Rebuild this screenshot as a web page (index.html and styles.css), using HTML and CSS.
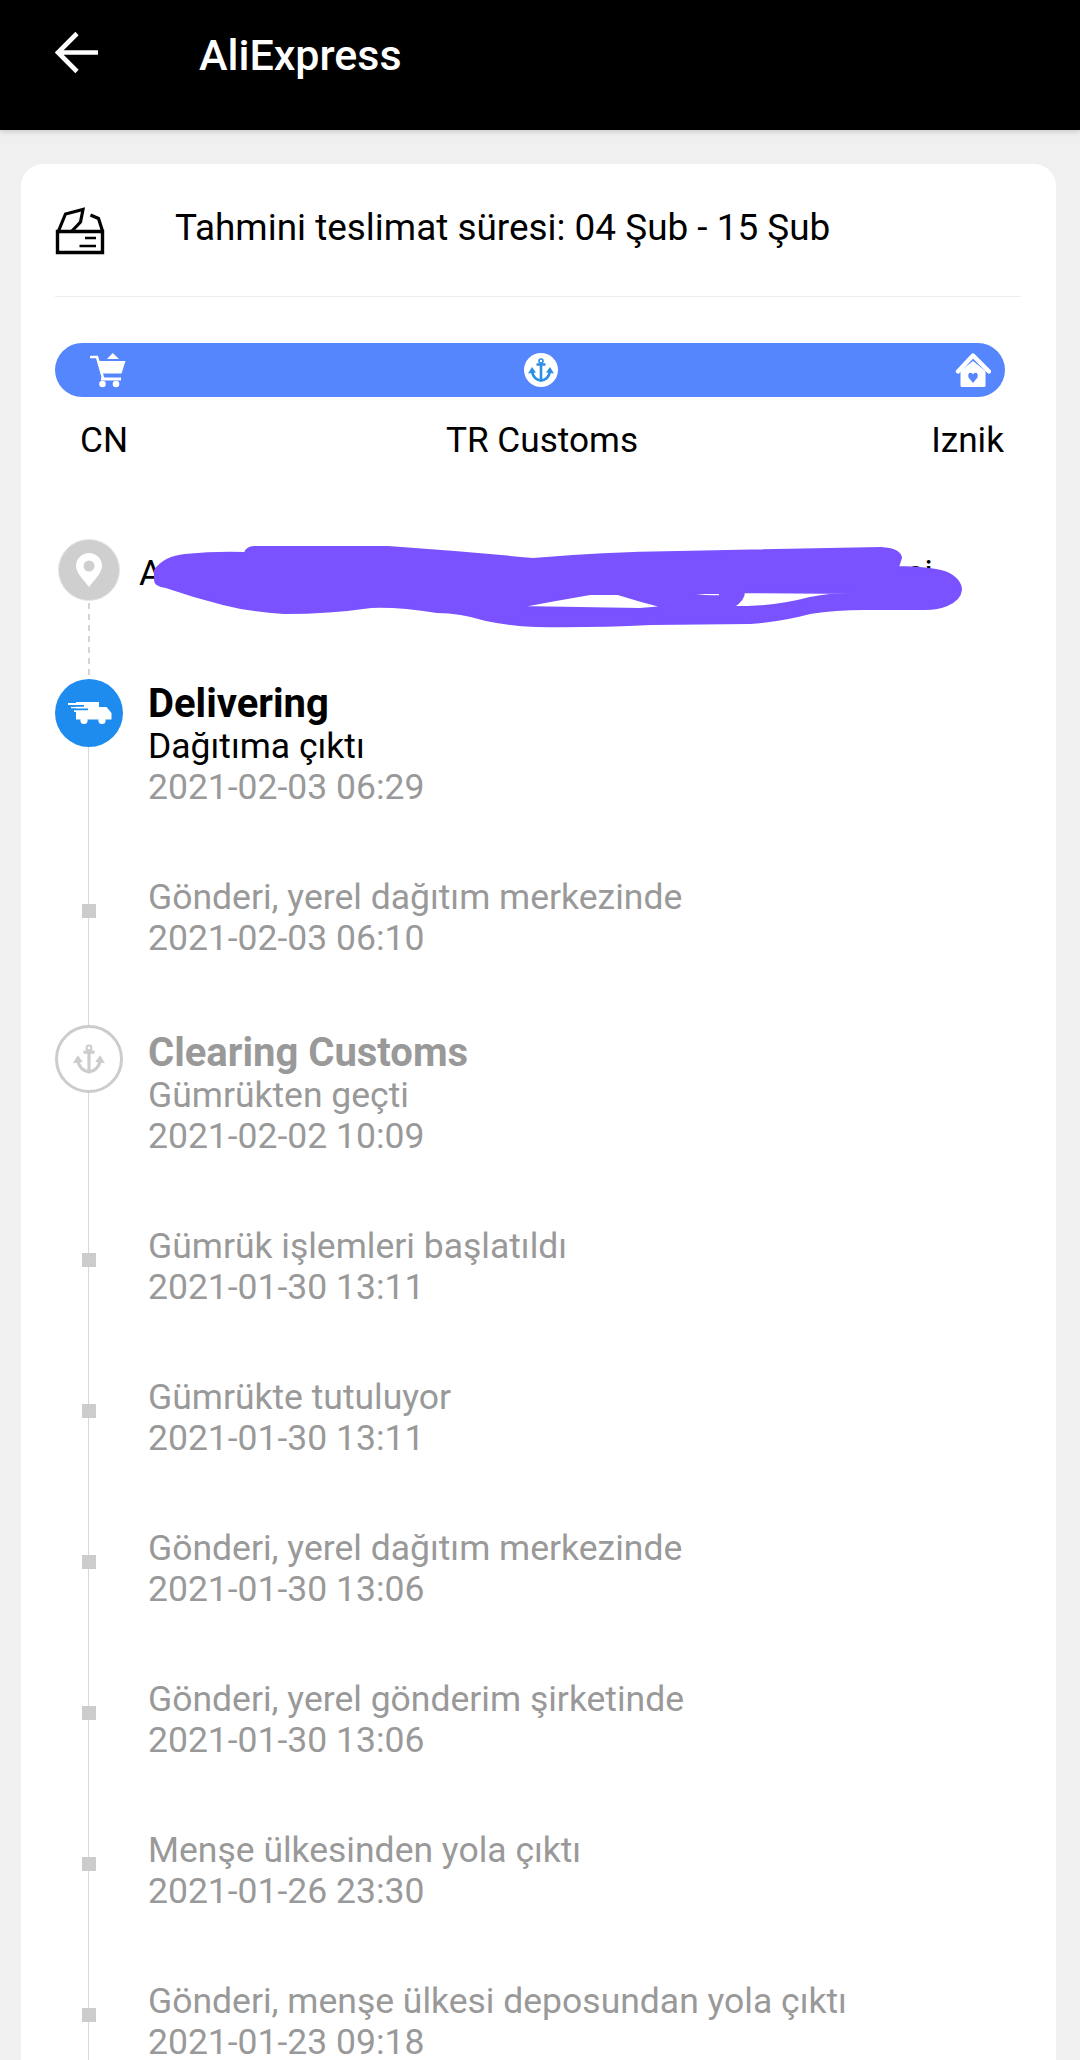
FILE: index.html
```html
<!DOCTYPE html>
<html lang="tr">
<head>
    <meta charset="UTF-8" />
    <meta name="viewport" content="width=device-width, initial-scale=1.0" />
    <title>AliExpress</title>
    <link rel="stylesheet" href="styles.css">
</head>
<body>
    <svg class="defs" width="0" height="0">
        <symbol id="anchor" viewBox="0 0 34 34">
            <circle cx="17" cy="8" r="2" fill="none" stroke="currentColor" stroke-width="1.6" />
            <path d="M12.5 11.5H21.5M17 10V28.5" fill="none" stroke="currentColor" stroke-width="2.6" />
            <path d="M8 18.5C9 24 13 27 17 27.5C21 27 25 24 26 18.5" fill="none" stroke="currentColor" stroke-width="2.6" />
            <path d="M4 20.500L8 14L12 19.500ZM30 20.500L26 14L22 19.500Z" fill="currentColor" />
        </symbol>
    </svg>

    <header class="topbar">
        <svg class="back" width="44" height="44" viewBox="0 0 44 44">
            <path d="M43 21.5H5M22 2.5L3 21.5L22 40.5" fill="none" stroke="#fff" stroke-width="4.600" />
        </svg>
        <span class="topbar-title">AliExpress</span>
    </header>

    <main class="card">
        <div class="eta">
            <svg class="eta-icon" width="50" height="48" viewBox="54 207 50 48">
                <path d="M56.5 231.5H101.5V252.5H56.5Z" fill="none" stroke="#000" stroke-width="3.4" />
                <path d="M57.5 231L64.5 214L82 209.5L79.5 222L71 231" fill="none" stroke="#000" stroke-width="3.2" />
                <path d="M89.5 215L97.5 218.5L101.5 231" fill="none" stroke="#000" stroke-width="3.2" />
                <path d="M84 238H95M78.5 246H95" fill="none" stroke="#000" stroke-width="2.6" />
            </svg>
            <span class="eta-text">Tahmini teslimat süresi: 04 Şub - 15 Şub</span>
        </div>

        <div class="progress">
            <svg width="36" height="36" viewBox="90 352 36 36">
                <path d="M91 357H97L103 378" fill="none" stroke="#fff" stroke-width="2.6" stroke-linecap="round" />
                <path d="M98 361H125.5L121.5 373.5H102Z" fill="#fff" />
                <path d="M107 359L112.7 353L119 359Z" fill="#fff" />
                <path d="M101 377.5H121V380.5H101Z" fill="#fff" />
                <circle cx="102.5" cy="384" r="3.3" fill="#fff" />
                <circle cx="116" cy="384" r="3.3" fill="#fff" />
            </svg>
            <svg class="anchor-badge" width="34" height="34">
                <circle cx="17" cy="17" r="17" fill="#fff" />
                <use href="#anchor" width="34" height="34" />
            </svg>
            <svg width="36" height="36" viewBox="955 352 36 36">
                <path d="M958 371.5L973 355.5L989 371.5" fill="none" stroke="#fff" stroke-width="4.4" stroke-linecap="round" stroke-linejoin="round" />
                <path d="M960.5 371L973 361L985.5 371V385.5Q985.5 387 984 387H962Q960.5 387 960.5 385.5Z" fill="#fff" />
                <path d="M973 383L968.5 377.5Q967.5 373 970.5 372.8Q972.3 372.8 973 374.5Q973.7 372.8 975.5 372.8Q978.5 373 977.5 377.5Z" fill="#5686fd" />
            </svg>
        </div>
        <div class="stops">
            <span>CN</span>
            <span>TR Customs</span>
            <span class="stop-end">Iznik</span>
        </div>

        <div class="address">
            <div class="pin">
                <svg width="28" height="34" viewBox="0 0 28 34">
                    <path fill-rule="evenodd" d="M14 34C9 27 1 20 1 13A13 13 0 0 1 27 13C27 20 19 27 14 34ZM14 7.500A5.500 5.500 0 1 0 14 18.500A5.500 5.500 0 1 0 14 7.500Z" fill="#fff" />
                </svg>
            </div>
            <div class="address-text">
                <span>A</span>
                <span>si</span>
            </div>
            <!-- scribble drawn over the street address -->
            <svg class="scribble" width="815" height="90" viewBox="150 540 815 90">
                <path fill-rule="evenodd" stroke="#7a52ff" stroke-width="2" stroke-linejoin="round" fill="#7a52ff"
                    d="M155 570Q165 557 185 555Q215 552 245 553Q247 547 254 547L388 547Q460 552 533 559Q600 553 678 552L881 548Q900 549 901 558L898 567Q935 568 947 573Q961 580 961 590Q960 600 947 605Q938 609 925 609H865Q835 609 810 613Q780 621 750 623L651 624Q590 627 536 626Q510 625 486 620Q460 612 437 612Q400 606 371 607Q330 613 284 613Q250 611 223 604Q195 597 166 587Q155 586 155 580Z
                    M518 607Q555 600 590 594H618Q640 601 664 607L640 609Z
                    M686 593H720V596Q700 597 686 593Z
                    M744 592L856 593Q830 594 810 598Q780 606 748 607H733Q744 600 744 592Z" />
            </svg>
        </div>

        <div class="timeline">
            <div class="event">
                <div class="marker">
                    <div class="dot dot-active">
                        <svg width="46" height="24" viewBox="62 702 46 24">
                            <path d="M72 703H95V708H102.500L107.500 714V720.500H72Z" fill="#fff" />
                            <circle cx="80" cy="721.500" r="3.600" fill="#fff" />
                            <circle cx="98" cy="721.500" r="3.600" fill="#fff" />
                            <path d="M64 705H76M67 708.500H79M70 712H82" stroke="#fff" stroke-width="1.800" />
                            <path d="M64 706.800H80M67 710.300H84" stroke="#1e8bef" stroke-width="1.700" />
                        </svg>
                    </div>
                </div>
                <div class="event-body is-current">
                    <div class="event-title">Delivering</div>
                    <div>Dağıtıma çıktı</div>
                    <div class="event-date">2021-02-03 06:29</div>
                </div>
            </div>
            <div class="event">
                <div class="marker"><div class="square"></div></div>
                <div class="event-body">
                    <div>Gönderi, yerel dağıtım merkezinde</div>
                    <div>2021-02-03 06:10</div>
                </div>
            </div>
            <div class="event event-customs">
                <div class="marker">
                    <div class="dot dot-muted">
                        <svg width="42" height="42"><use href="#anchor" width="42" height="42" /></svg>
                    </div>
                </div>
                <div class="event-body">
                    <div class="event-title">Clearing Customs</div>
                    <div>Gümrükten geçti</div>
                    <div>2021-02-02 10:09</div>
                </div>
            </div>
            <div class="event">
                <div class="marker"><div class="square"></div></div>
                <div class="event-body">
                    <div>Gümrük işlemleri başlatıldı</div>
                    <div>2021-01-30 13:11</div>
                </div>
            </div>
            <div class="event">
                <div class="marker"><div class="square"></div></div>
                <div class="event-body">
                    <div>Gümrükte tutuluyor</div>
                    <div>2021-01-30 13:11</div>
                </div>
            </div>
            <div class="event">
                <div class="marker"><div class="square"></div></div>
                <div class="event-body">
                    <div>Gönderi, yerel dağıtım merkezinde</div>
                    <div>2021-01-30 13:06</div>
                </div>
            </div>
            <div class="event">
                <div class="marker"><div class="square"></div></div>
                <div class="event-body">
                    <div>Gönderi, yerel gönderim şirketinde</div>
                    <div>2021-01-30 13:06</div>
                </div>
            </div>
            <div class="event">
                <div class="marker"><div class="square"></div></div>
                <div class="event-body">
                    <div>Menşe ülkesinden yola çıktı</div>
                    <div>2021-01-26 23:30</div>
                </div>
            </div>
            <div class="event">
                <div class="marker"><div class="square"></div></div>
                <div class="event-body">
                    <div>Gönderi, menşe ülkesi deposundan yola çıktı</div>
                    <div>2021-01-23 09:18</div>
                </div>
            </div>
        </div>
    </main>
</body>
</html>
```

FILE: styles.css
```css
:root {
    --page: #f0f0f0;
    --blue-bar: #5686fd;
    --blue-dot: #1e8bef;
    --muted: #999;
    --rule: #d8d8d8;
    --marker: #ccc;
}

html,
body {
    height: 100%;
    overflow: hidden;
}

body {
    margin: 0;
    background-color: var(--page);
    color: #000;
    font-family: Roboto, sans-serif;
}

.defs {
    position: absolute;
}

.topbar {
    display: flex;
    align-items: center;
    height: 130px;
    padding-left: 55px;
    box-sizing: border-box;
    background-color: #000;
    color: #fff;
    box-shadow: 0 2px 5px rgba(0, 0, 0, 0.15);
    position: relative;
}

.back {
    margin-top: -24px;
}

.topbar-title {
    margin-left: 100px;
    margin-top: -21px;
    font-size: 43px;
    font-weight: 500;
}

.card {
    margin: 34px 24px 0 21px;
    padding: 0 35px 0 34px;
    background-color: #fff;
    border-radius: 22px 22px 0 0;
}

.eta {
    display: flex;
    align-items: center;
    height: 132px;
    border-bottom: 1px solid #eee;
}

.eta-icon {
    margin-top: 2px;
}

.eta-text {
    margin-left: 70px;
    margin-top: -5px;
    font-size: 36.9px;
}

.progress {
    display: flex;
    justify-content: space-between;
    align-items: center;
    height: 54px;
    margin: 46px 16px 0 0;
    padding: 0 14px 0 35px;
    background-color: var(--blue-bar);
    border-radius: 27px;
}

.anchor-badge {
    color: #2b8fe6;
}

.stops {
    display: grid;
    grid-template-columns: 1fr auto 1fr;
    margin: 23px 17px 0 25px;
    font-size: 35.2px;
    line-height: 41px;
}

.stop-end {
    text-align: right;
}

.address {
    display: flex;
    align-items: center;
    position: relative;
    margin-top: 78px;
    margin-left: 3px;
    height: 62px;
}

.pin {
    display: flex;
    justify-content: center;
    align-items: center;
    width: 60px;
    height: 60px;
    border: 1px solid #e4e8e0;
    border-radius: 50%;
    background-color: #cfcfcf;
    flex-shrink: 0;
}

.address-text {
    display: flex;
    justify-content: space-between;
    width: 794px;
    margin-left: 19px;
    margin-top: 5px;
    font-size: 35.5px;
}

.scribble {
    position: absolute;
    left: 92px;
    top: 1px;
}

.timeline {
    position: relative;
    margin-top: 81px;
    padding-bottom: 80px;
}

/* dashed part up to the address pin, solid part through the events */
.timeline::before {
    content: "";
    position: absolute;
    left: 33px;
    top: -79px;
    width: 2px;
    height: 78px;
    background: repeating-linear-gradient(to bottom, #d4d4d4 0 6px, transparent 6px 11px);
}

.timeline::after {
    content: "";
    position: absolute;
    left: 33px;
    top: 0;
    bottom: 0;
    border-left: 1px solid var(--rule);
}

.event {
    display: flex;
    position: relative;
    z-index: 1;
    padding-bottom: 69px;
}

.event-customs .event-body {
    padding-top: 3px;
}

.marker {
    display: flex;
    justify-content: center;
    width: 68px;
    flex-shrink: 0;
}

.dot {
    display: flex;
    justify-content: center;
    align-items: center;
    width: 68px;
    height: 68px;
    box-sizing: border-box;
    border-radius: 50%;
}

.dot-active {
    margin-top: -3px;
    background-color: var(--blue-dot);
}

.dot-muted {
    margin-top: -3px;
    background-color: #fff;
    border: 3px solid var(--marker);
    color: var(--marker);
}

.square {
    width: 14px;
    height: 14px;
    margin-top: 27px;
    background-color: var(--marker);
}

.event-body {
    margin-left: 25px;
    color: var(--muted);
    font-size: 35.5px;
    line-height: 41px;
}

.event-title {
    font-size: 40px;
    font-weight: 700;
    line-height: 44px;
}

.is-current {
    color: #000;
}

.event-date {
    color: var(--muted);
}
```
